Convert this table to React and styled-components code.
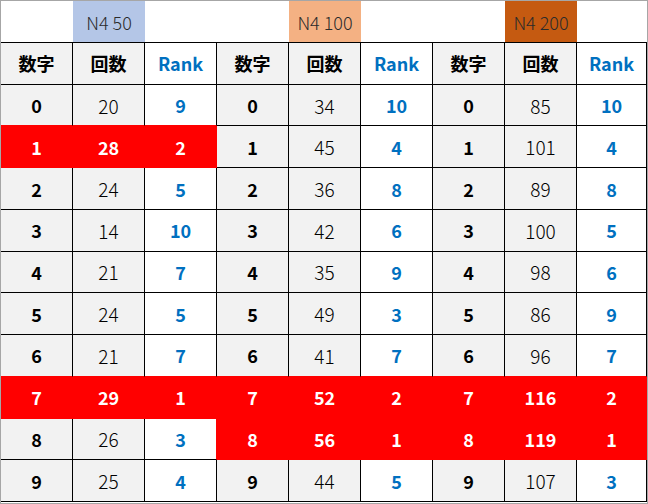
import React from "react";
import styled, { createGlobalStyle } from "styled-components";

const Global = createGlobalStyle`
  html, body { margin: 0; padding: 0; background: #ffffff; }
  body { font-family: "Noto Sans CJK JP", "Noto Sans", sans-serif; }
`;

const RED = "#ff0000";

const Frame = styled.div`
  width: 648px;
  height: 504px;
  box-sizing: border-box;
  border: 1px solid #a6a6a6;
  background: #ffffff;
  overflow: hidden;
`;

const Grid = styled.div`
  display: grid;
  grid-template-columns: repeat(8, 72px) 70px;
  grid-template-rows: 42px repeat(11, 1fr);
  height: 501px;
`;

const TopCell = styled.div`
  display: flex;
  align-items: center;
  justify-content: center;
  box-sizing: border-box;
  border-bottom: 1px solid #000;
  background: ${(p) => p.$bg || "#ffffff"};
  color: #2b2b2b;
  font-size: 18px;
  font-weight: 300;
`;

const Cell = styled.div`
  display: flex;
  align-items: center;
  justify-content: center;
  box-sizing: border-box;
  border-right: 1px solid ${(p) => p.$rb};
  border-bottom: 1px solid ${(p) => p.$bb};
  background: ${(p) => (p.$red ? RED : p.$gray ? "#f2f2f2" : "#ffffff")};
  color: ${(p) => (p.$red ? "#ffffff" : p.$blue ? "#0070c0" : "#000000")};
  font-size: ${(p) => (p.$bold || p.$red ? "18px" : "19px")};
  font-weight: ${(p) => (p.$bold || p.$red ? 700 : 300)};
`;

const groups = [
  {
    label: "N4 50",
    bg: "#b4c6e7",
    counts: [20, 28, 24, 14, 21, 24, 21, 29, 26, 25],
    ranks: [9, 2, 5, 10, 7, 5, 7, 1, 3, 4],
  },
  {
    label: "N4 100",
    bg: "#f4b183",
    counts: [34, 45, 36, 42, 35, 49, 41, 52, 56, 44],
    ranks: [10, 4, 8, 6, 9, 3, 7, 2, 1, 5],
  },
  {
    label: "N4 200",
    bg: "#c55a11",
    counts: [85, 101, 89, 100, 98, 86, 96, 116, 119, 107],
    ranks: [10, 4, 8, 5, 6, 9, 7, 2, 1, 3],
  },
];

const isRed = (r, c) => {
  if (r === 1 && c <= 2) return true;
  if (r === 7) return true;
  if (r === 8 && c >= 3) return true;
  return false;
};

export default function App() {
  const cells = [];
  groups.forEach((g, gi) => {
    cells.push(<TopCell key={`t${gi}a`} />);
    cells.push(
      <TopCell key={`t${gi}b`} $bg={g.bg}>
        {g.label}
      </TopCell>
    );
    cells.push(<TopCell key={`t${gi}c`} />);
  });
  groups.forEach((g, gi) => {
    ["数字", "回数", "Rank"].forEach((h, k) => {
      const c = gi * 3 + k;
      cells.push(
        <Cell
          key={`h${c}`}
          $gray={k < 2}
          $blue={k === 2}
          $bold
          $rb="#000"
          $bb={isRed(0, c) ? RED : "#000"}
        >
          {h}
        </Cell>
      );
    });
  });
  for (let r = 0; r < 10; r++) {
    groups.forEach((g, gi) => {
      const vals = [r, g.counts[r], g.ranks[r]];
      vals.forEach((v, k) => {
        const c = gi * 3 + k;
        const red = isRed(r, c);
        const rightRed = red || (c < 8 && isRed(r, c + 1));
        const bottomRed = red || (r < 9 && isRed(r + 1, c));
        cells.push(
          <Cell
            key={`d${r}-${c}`}
            $red={red}
            $gray={k < 2}
            $blue={k === 2}
            $bold={k !== 1}
            $rb={rightRed ? RED : "#000"}
            $bb={bottomRed ? RED : "#000"}
          >
            {v}
          </Cell>
        );
      });
    });
  }
  return (
    <>
      <Global />
      <Frame>
        <Grid>{cells}</Grid>
      </Frame>
    </>
  );
}
